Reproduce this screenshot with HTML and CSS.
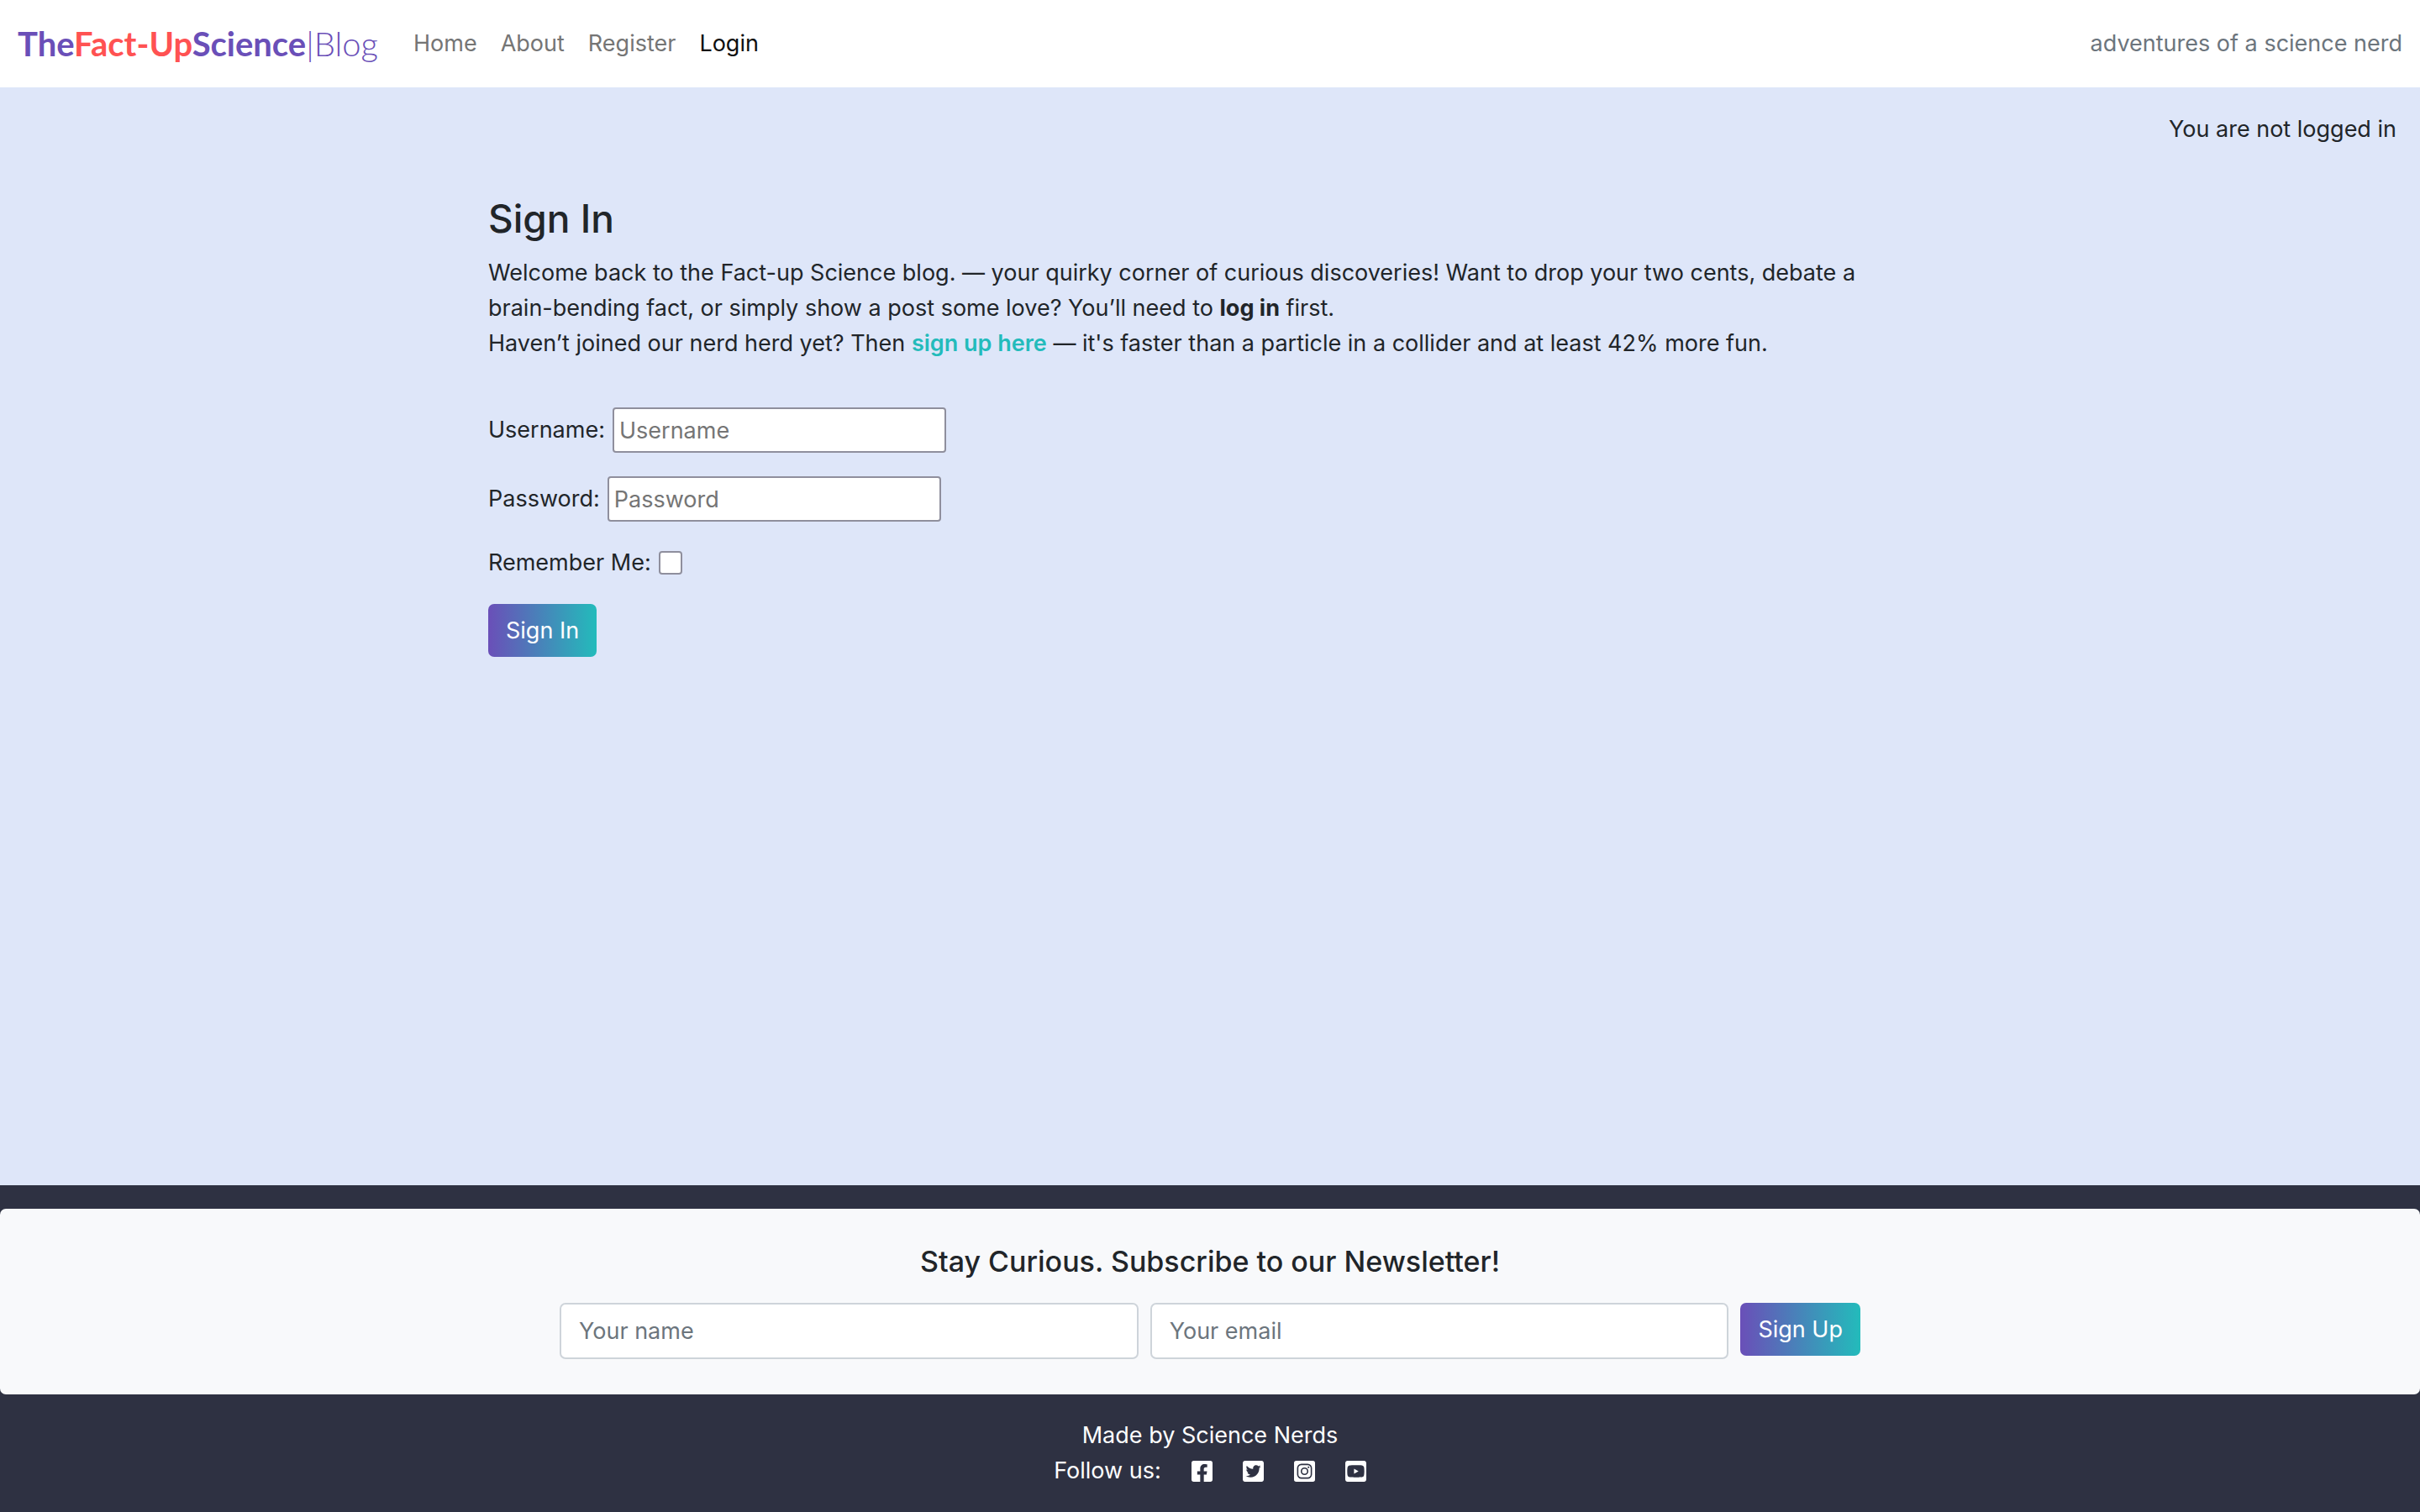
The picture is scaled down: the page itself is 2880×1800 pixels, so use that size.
FILE: index.html
```html
<!DOCTYPE html>
<html lang="en">
<head>
  <meta charset="utf-8">
  <meta name="viewport" content="width=device-width, initial-scale=1">
  <title>The Fact-Up Science Blog</title>
  <link rel="stylesheet" href="styles.css">
</head>
<body>
  <header class="navbar">
    <a class="brand" href="#">The<span class="brand-accent">Fact-Up</span>Science<span class="brand-light">|Blog</span></a>
    <nav class="nav-links">
      <a class="nav-link" href="#">Home</a>
      <a class="nav-link" href="#">About</a>
      <a class="nav-link" href="#">Register</a>
      <a class="nav-link active" href="#">Login</a>
    </nav>
    <span class="tagline">adventures of a science nerd</span>
  </header>

  <main class="main">
    <p class="status">You are not logged in</p>
    <section class="content">
      <h1 class="title">Sign In</h1>
      <p class="intro">Welcome back to the Fact-up Science blog. — your quirky corner of curious discoveries! Want to drop your two cents, debate a brain-bending fact, or simply show a post some love? You’ll need to <strong>log in</strong> first.<br>Haven’t joined our nerd herd yet? Then <a class="link" href="#">sign up here</a> — it's faster than a particle in a collider and at least 42% more fun.</p>
      <form class="login">
        <div class="row"><label for="username">Username:</label><input class="field" id="username" type="text" placeholder="Username"></div>
        <div class="row"><label for="password">Password:</label><input class="field" id="password" type="password" placeholder="Password"></div>
        <div class="row"><label for="remember">Remember Me:</label><input class="check" id="remember" type="checkbox"></div>
        <button class="btn" type="submit">Sign In</button>
      </form>
    </section>
  </main>

  <footer class="footer">
    <section class="newsletter">
      <h2 class="newsletter-title">Stay Curious. Subscribe to our Newsletter!</h2>
      <form class="newsletter-form">
        <input class="control" type="text" placeholder="Your name" aria-label="Your name">
        <input class="control" type="email" placeholder="Your email" aria-label="Your email">
        <button class="btn" type="submit">Sign Up</button>
      </form>
    </section>
    <p class="credit">Made by Science Nerds</p>
    <div class="social">
      <span>Follow us:</span>
      <a href="#" aria-label="Facebook"><svg class="icon" viewBox="0 32 448 448"><path d="M400 32H48A48 48 0 0 0 0 80v352a48 48 0 0 0 48 48h137.25V327.69h-63V256h63v-54.64c0-62.15 37-96.48 93.67-96.48 27.14 0 55.52 4.84 55.52 4.84v61h-31.27c-30.81 0-40.42 19.12-40.42 38.73V256h68.78l-11 71.69h-57.78V480H400a48 48 0 0 0 48-48V80a48 48 0 0 0-48-48z"/></svg></a>
      <a href="#" aria-label="Twitter"><svg class="icon" viewBox="0 32 448 448"><path d="M400 32H48C21.5 32 0 53.5 0 80v352c0 26.5 21.5 48 48 48h352c26.5 0 48-21.5 48-48V80c0-26.5-21.5-48-48-48zm-48.9 158.8c.2 2.8.2 5.7.2 8.5 0 86.7-66 186.6-186.6 186.6-37.2 0-71.7-10.8-100.7-29.4 5.3.6 10.4.8 15.8.8 30.7 0 58.9-10.4 81.4-28-28.8-.6-53-19.5-61.3-45.5 10.1 1.5 19.2 1.5 29.6-1.2-30-6.1-52.5-32.5-52.5-64.4v-.8c8.7 4.9 18.9 7.9 29.6 8.3a65.447 65.447 0 0 1-29.2-54.6c0-12.2 3.2-23.4 8.9-33.1 32.3 39.8 80.8 65.8 135.2 68.6-9.3-44.5 24-80.6 64-80.6 18.9 0 35.9 7.9 47.9 20.7 14.8-2.8 29-8.3 41.6-15.8-4.9 15.2-15.2 28-28.8 36.1 13.2-1.4 26-5.1 37.8-10.2-8.9 13.1-20.1 24.7-32.9 34z"/></svg></a>
      <a href="#" aria-label="Instagram"><svg class="icon" viewBox="0 32 448 448"><path fill-rule="evenodd" d="M48 32H400A48 48 0 0 1 448 80V432A48 48 0 0 1 400 480H48A48 48 0 0 1 0 432V80A48 48 0 0 1 48 32zM158 96A94 94 0 0 0 64 190V322A94 94 0 0 0 158 416H290A94 94 0 0 0 384 322V190A94 94 0 0 0 290 96zM160 125H288A67 67 0 0 1 355 192V320A67 67 0 0 1 288 387H160A67 67 0 0 1 93 320V192A67 67 0 0 1 160 125z"/><path class="icon-cut" fill-rule="evenodd" d="M224 174a82 82 0 1 0 0 164a82 82 0 1 0 0-164zm0 29a53 53 0 1 1 0 106a53 53 0 1 1 0-106zM309 152a19 19 0 1 0 0 38a19 19 0 1 0 0-38z"/></svg></a>
      <a href="#" aria-label="YouTube"><svg class="icon" viewBox="0 32 448 448"><path d="M186.8 202.1l95.2 54.1-95.2 54.1V202.1zM448 80v352c0 26.5-21.5 48-48 48H48c-26.5 0-48-21.5-48-48V80c0-26.5 21.5-48 48-48h352c26.5 0 48 21.5 48 48zm-42 176.3s0-59.6-7.6-88.2c-4.2-15.8-16.5-28.2-32.2-32.4C337.9 128 224 128 224 128s-113.9 0-142.2 7.7c-15.7 4.2-28 16.6-32.2 32.4-7.6 28.5-7.6 88.2-7.6 88.2s0 59.6 7.6 88.2c4.2 15.8 16.5 27.7 32.2 31.9C110.1 384 224 384 224 384s113.9 0 142.2-7.7c15.7-4.2 28-16.1 32.2-31.9 7.6-28.5 7.6-88.1 7.6-88.1z"/></svg></a>
    </div>
  </footer>
</body>
</html>
```
FILE: styles.css
```css
:root {
  --purple: #6a4fb8;
  --teal: #23bbbb;
  --red: #ff5252;
  --dark: #2e3142;
  --text: #212529;
  --muted: #6c757d;
}

* { box-sizing: border-box; }

body {
  margin: 0;
  min-height: 100vh;
  display: flex;
  flex-direction: column;
  background: #dee6f9;
  color: var(--text);
  font: 400 27px/42px Inter, "Liberation Sans", sans-serif;
}

h1, h2, p { margin: 0; }
a { color: inherit; text-decoration: none; }
input, button { font: inherit; }

.navbar {
  display: flex;
  align-items: center;
  padding: 14px 21px;
  min-height: 104px;
  background: #fff;
}

.brand {
  margin-right: 28px;
  color: var(--purple);
  font: 700 40px/60px Lato, sans-serif;
}
.brand-accent { color: var(--red); }
.brand-light { font-weight: 300; }

.nav-links { display: flex; flex: 1; }
.nav-link { padding: 0 14px; color: #757575; }
.nav-link.active { color: #0f0f0f; }
.tagline { color: var(--muted); }

.main { flex: 1; padding: 29px 28px 28px; }
.status { text-align: right; }

.content {
  max-width: 1718px;
  margin: 56px auto 0;
}
.title {
  margin-bottom: 14px;
  font-size: 46px;
  font-weight: 500;
  line-height: 59px;
}
.intro { max-width: 1680px; }
.link { color: var(--teal); font-weight: 600; }

.login {
  display: flex;
  flex-direction: column;
  align-items: flex-start;
  gap: 28px;
  margin-top: 55px;
}
.row { display: flex; align-items: center; gap: 9px; }
.field {
  width: 397px;
  height: 54px;
  padding: 2px 6px;
  border: 2px solid #8f8f9d;
  border-radius: 4px;
  background: #fff;
  color: var(--text);
}
.field::placeholder { color: #757575; }
.check {
  appearance: none;
  width: 28px;
  height: 28px;
  margin: 0;
  border: 2px solid #8f8f9d;
  border-radius: 4px;
  background: #fff;
}
.check:checked { background: var(--teal); }

.btn {
  height: 63px;
  padding: 0 21px;
  border: 0;
  border-radius: 7px;
  background: linear-gradient(to right, var(--purple), var(--teal));
  color: #fff;
}

.footer {
  padding: 28px 0;
  background: var(--dark);
  color: #fff;
  text-align: center;
}
.newsletter {
  margin-bottom: 28px;
  padding: 42px;
  border-radius: 7px;
  background: #f8f9fb;
  color: var(--text);
}
.newsletter-title {
  margin-bottom: 28px;
  font-size: 34px;
  font-weight: 500;
  line-height: 42px;
}
.newsletter-form {
  display: flex;
  align-items: flex-start;
  gap: 14px;
  max-width: 1548px;
  margin: 0 auto;
}
.control {
  flex: 1;
  min-width: 0;
  height: 67px;
  padding: 0 21px;
  border: 2px solid #ced4da;
  border-radius: 7px;
  background: #fff;
  color: var(--text);
}
.control::placeholder { color: var(--muted); }

.social {
  display: flex;
  justify-content: center;
  align-items: center;
  gap: 36px;
}
.social a { display: flex; }
.icon { width: 25px; height: 25px; fill: currentColor; }
.icon-cut { fill: var(--dark); }
```
